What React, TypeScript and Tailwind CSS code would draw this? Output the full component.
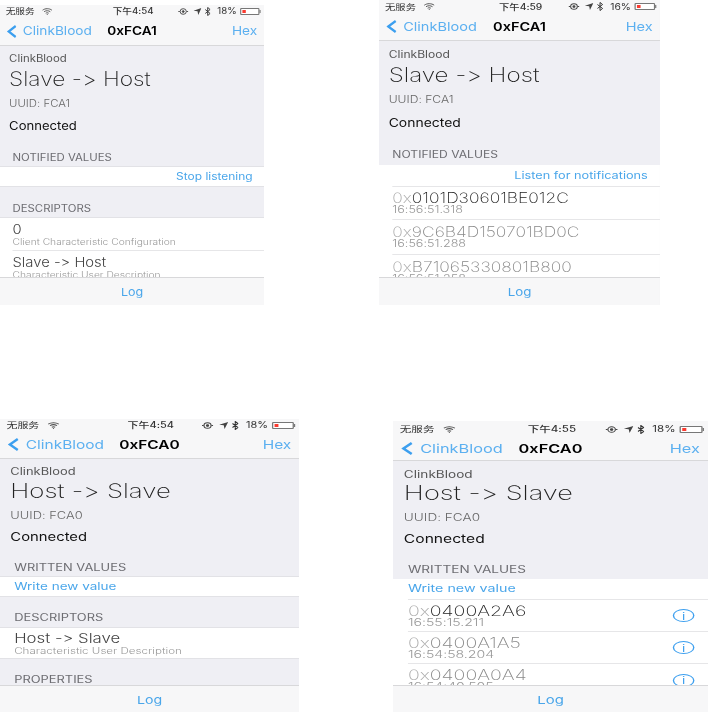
import type { ReactNode } from "react";

const WifiIcon = () => (
  <svg width="9" height="7" viewBox="0 0 11 7" preserveAspectRatio="none" fill="none" stroke="#555" strokeWidth="1">
    <path d="M.5 2.2C3.3.2 7.7.2 10.5 2.2M2.2 3.7c2-1.3 4.6-1.3 6.6 0M3.9 5.2c1-.6 2.2-.6 3.2 0" />
    <circle cx="5.5" cy="6.3" r=".6" fill="#555" stroke="none" />
  </svg>
);

const StatusIcons = () => (
  <>
    <svg width="12" height="7" viewBox="0 0 14 8" preserveAspectRatio="none" fill="none" stroke="#444" strokeWidth="1">
      <circle cx="7" cy="4" r="3.2" />
      <circle cx="7" cy="4" r="1" fill="#444" />
      <path d="M2 4h1.5M10.5 4H12" />
    </svg>
    <svg width="7" height="7" viewBox="0 0 9 8" preserveAspectRatio="none" fill="#444">
      <path d="M9 0L5.4 8 4.6 3.8 0 3.2z" />
    </svg>
    <svg width="5" height="9" viewBox="0 0 7 10" preserveAspectRatio="none" fill="none" stroke="#333" strokeWidth="1.1">
      <path d="M.5 2.8l6 4.4L3.5 9.5v-9l3 2.3-6 4.4" />
    </svg>
  </>
);

const Battery = () => (
  <span className="flex items-center">
    <span className="flex h-[7px] w-[17px] rounded-[1px] border border-[#777] bg-white p-px">
      <span className="h-full w-[3px] bg-[#fa3a30]" />
    </span>
    <span className="h-[3px] w-px bg-[#777]" />
  </span>
);

const Chevron = () => (
  <svg width="9" height="13" viewBox="0 0 11 13" preserveAspectRatio="none" fill="none" stroke="#3c9fef" strokeWidth="2.3">
    <path d="M9.5 1L2 6.5l7.5 5.5" />
  </svg>
);

const Label = ({ children, className }: { children: ReactNode; className: string }) => (
  <div className={`flex items-end pl-[11px] text-[10px] leading-3 text-[#6d6d72] ${className}`}>{children}</div>
);

const ActionRow = ({ children, className }: { children: ReactNode; className: string }) => (
  <div className={`flex items-center border-[#e2e2e6] bg-white text-[10.5px] text-[#4aa6ea] ${className}`}>
    {children}
  </div>
);

const Descriptor = ({ value, desc, className }: { value: string; desc: string; className: string }) => (
  <div className={`flex flex-col justify-center ${className}`}>
    <div className="text-[13px] leading-[15px] font-light text-[#444]">{value}</div>
    <div className="text-[9px] leading-[10px] font-light text-[#999]">{desc}</div>
  </div>
);

const ValueRow = ({
  hex,
  time,
  dark,
  info,
  className,
}: {
  hex: string;
  time: string;
  dark?: boolean;
  info?: boolean;
  className: string;
}) => (
  <div className={`flex items-center justify-between border-b border-[#e6e6e8] pr-[10px] ${className}`}>
    <div className="pb-px">
      <div className={`text-[14.4px] leading-[14px] font-extralight ${dark ? "text-[#222]" : "text-[#888]"}`}>
        <span className="text-[#aaa]">0x</span>
        {hex}
      </div>
      <div className="text-[10.4px] leading-[9px] font-light text-[#999]">{time}</div>
    </div>
    {info && (
      <span className="flex h-[13px] w-4 items-center justify-center rounded-[50%] border border-[#3c9fef] text-[10px] leading-none text-[#3c9fef]">
        i
      </span>
    )}
  </div>
);

type PhoneProps = {
  frame: string;
  stretch: string;
  time: string;
  level: string;
  title: string;
  name: string;
  uuid: string;
  statusClass: string;
  navClass: string;
  headClass: string;
  logClass: string;
  children: ReactNode;
};

// the shots are squashed screenshots, so each phone is the same 232px layout stretched to its width
const Phone = ({ frame, stretch, time, level, title, name, uuid, statusClass, navClass, headClass, logClass, children }: PhoneProps) => (
  <div className={`shrink-0 overflow-hidden ${frame}`}>
    <div className={`flex h-full w-[232px] origin-left flex-col bg-[#efeff4] blur-[0.35px] ${stretch}`}>
      <div className="shrink-0 border-b border-[#d8d8da] bg-[#f7f7f8]">
        <div className={`grid grid-cols-[1fr_auto_1fr] items-center pr-[3px] pl-[5px] text-[8.5px] leading-3 text-[#333] ${statusClass}`}>
          <div className="flex items-center gap-[6px]">
            <span>无服务</span>
            <WifiIcon />
          </div>
          <div className="text-center font-medium whitespace-nowrap">下午{time}</div>
          <div className="flex items-center justify-end gap-[3px]">
            <StatusIcons />
            <span className="ml-[3px]">{level}</span>
            <Battery />
          </div>
        </div>
        <div className={`grid grid-cols-[1fr_auto_1fr] items-center px-[6px] text-[12px] ${navClass}`}>
          <div className="flex items-center gap-[5px] text-[#5cb0f0]">
            <Chevron />
            <span>ClinkBlood</span>
          </div>
          <div className="text-center font-semibold text-black">{title}</div>
          <div className="text-right text-[#5cb0f0]">Hex</div>
        </div>
      </div>
      <div className="min-h-0 flex-1 overflow-hidden">
        <div className={`grid pl-[8px] ${headClass}`}>
          <div className="flex items-center text-[10px] text-[#555]">ClinkBlood</div>
          <div className="flex items-center text-[20px] font-extralight text-[#222]">{name}</div>
          <div className="flex items-center text-[10px] font-light text-[#666]">UUID: {uuid}</div>
          <div className="flex items-center text-[11.5px] text-[#111]">Connected</div>
        </div>
        {children}
      </div>
      <div className={`flex shrink-0 items-center justify-center border-t border-[#d8d8da] bg-[#f7f7f8] pt-[2px] text-[11px] text-[#4aa6ea] ${logClass}`}>
        Log
      </div>
    </div>
  </div>
);

export default function App() {
  return (
    <div className="flex h-[712px] w-[708px] flex-col justify-between overflow-hidden bg-white font-['Inter','Noto_Sans_CJK_SC',sans-serif] [font-feature-settings:'calt'_0,'liga'_0]">
      <div className="flex items-end justify-between pr-[48px]">
        <Phone
          frame="h-[300px] w-[264px]"
          stretch="scale-x-[1.138]"
          time="4:54"
          level="18%"
          title="0xFCA1"
          name="Slave -> Host"
          uuid="FCA1"
          statusClass="h-3"
          navClass="h-7"
          headClass="grid-rows-[20px_22px_27px_19px] pt-[2px]"
          logClass="h-7"
        >
          <Label className="h-[30px] pb-[3px]">NOTIFIED VALUES</Label>
          <ActionRow className="h-[21px] justify-end border-y pr-[10px]">Stop listening</ActionRow>
          <Label className="h-[30px] pb-[3px]">DESCRIPTORS</Label>
          <div className="border-t border-[#e2e2e6] bg-white pl-[11px]">
            <Descriptor className="h-[33px] border-b border-[#e6e6e8]" value="0" desc="Client Characteristic Configuration" />
            <Descriptor className="h-[33px]" value="Slave -> Host" desc="Characteristic User Description" />
          </div>
        </Phone>
        <Phone
          frame="h-[305px] w-[281px]"
          stretch="scale-x-[1.211]"
          time="4:59"
          level="16%"
          title="0xFCA1"
          name="Slave -> Host"
          uuid="FCA1"
          statusClass="h-[13px]"
          navClass="h-[27px]"
          headClass="grid-rows-[20px_22px_26px_24px] pt-[3px]"
          logClass="h-7"
        >
          <Label className="h-[29px] pb-[5px]">NOTIFIED VALUES</Label>
          <ActionRow className="h-[21px] justify-end pr-[10px]">Listen for notifications</ActionRow>
          <div className="bg-white pl-[11px]">
            <ValueRow className="h-[34px] border-t" hex="0101D30601BE012C" time="16:56:51.318" dark />
            <ValueRow className="h-[35px]" hex="9C6B4D150701BD0C" time="16:56:51.288" />
            <ValueRow className="h-[35px]" hex="B71065330801B800" time="16:56:51.258" />
          </div>
        </Phone>
      </div>
      <div className="flex items-end justify-between">
        <Phone
          frame="h-[293px] w-[299px]"
          stretch="scale-x-[1.289]"
          time="4:54"
          level="18%"
          title="0xFCA0"
          name="Host -> Slave"
          uuid="FCA0"
          statusClass="h-3"
          navClass="h-[27px]"
          headClass="grid-rows-[20px_20px_28px_18px] pt-[2px]"
          logClass="h-[27px]"
        >
          <Label className="h-[29px] pb-[3px]">WRITTEN VALUES</Label>
          <ActionRow className="h-[21px] border-y pl-[11px]">Write new value</ActionRow>
          <Label className="h-[30px] pb-[4px]">DESCRIPTORS</Label>
          <div className="border-y border-[#e2e2e6] bg-white pl-[11px]">
            <Descriptor className="h-[30px]" value="Host -> Slave" desc="Characteristic User Description" />
          </div>
          <Label className="h-[26px]">PROPERTIES</Label>
        </Phone>
        <Phone
          frame="h-[291px] w-[315px]"
          stretch="scale-x-[1.358]"
          time="4:55"
          level="18%"
          title="0xFCA0"
          name="Host -> Slave"
          uuid="FCA0"
          statusClass="h-4"
          navClass="h-[23px]"
          headClass="grid-rows-[20px_18px_30px_16px] pt-[3px]"
          logClass="h-[27px]"
        >
          <Label className="h-[31px] pb-[4px]">WRITTEN VALUES</Label>
          <ActionRow className="h-5 pl-[11px]">Write new value</ActionRow>
          <div className="bg-white pl-[11px]">
            <ValueRow className="h-[33px] border-t" hex="0400A2A6" time="16:55:15.211" dark info />
            <ValueRow className="h-[32px]" hex="0400A1A5" time="16:54:58.204" info />
            <ValueRow className="h-[33px]" hex="0400A0A4" time="16:54:40.505" info />
          </div>
        </Phone>
      </div>
    </div>
  );
}
